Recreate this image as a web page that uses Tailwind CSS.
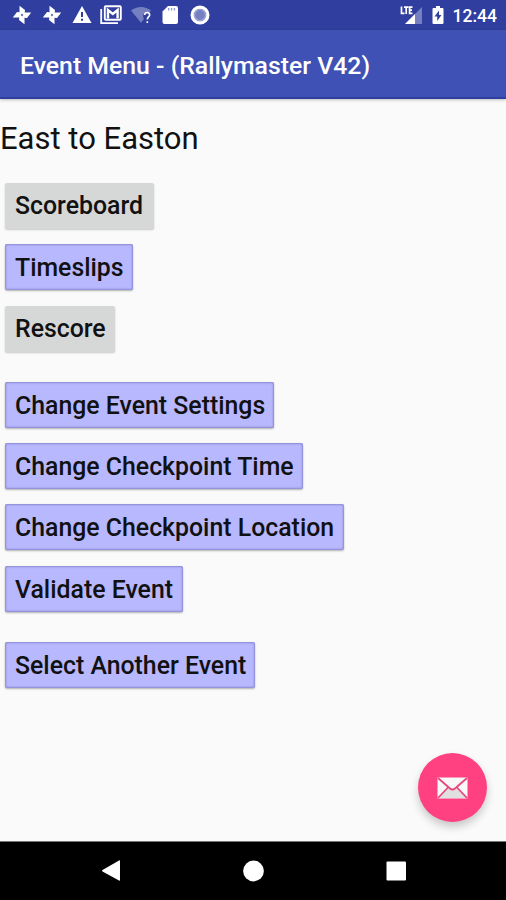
<!DOCTYPE html>
<html lang="en">

<head>
  <meta charset="UTF-8">
  <meta name="viewport" content="width=device-width, initial-scale=1.0">
  <title>Event Menu</title>
  <script src="https://cdn.jsdelivr.net/npm/@tailwindcss/browser@4"></script>
</head>

<body class="bg-[#fafafa] font-[Roboto,sans-serif] text-[#111]">
  <div class="relative flex flex-col h-[900px] w-[506px] overflow-hidden">
    <!-- Status Bar -->
    <div class="flex items-center justify-between h-[30px] shrink-0 bg-[#303f9f] pl-[12px] pr-[9px] text-white">
      <div class="flex items-center gap-[10px]">
        <svg class="size-[20px]" viewBox="0 0 20 20" fill="currentColor">
          <path d="M7.500 .8L13 5L12.500 10H7.500Z" />
          <path d="M19.200 7.500L15 13L10 12.500V7.500Z" />
          <path d="M12.500 19.200L7 15L7.500 10H12.500Z" />
          <path d="M.8 12.500L5 7L10 7.500V12.500Z" />
          <circle cx="10" cy="10" r="1.200" fill="#7580c1" />
        </svg>
        <svg class="size-[20px]" viewBox="0 0 20 20" fill="currentColor">
          <path d="M7.500 .8L13 5L12.500 10H7.500Z" />
          <path d="M19.200 7.500L15 13L10 12.500V7.500Z" />
          <path d="M12.500 19.200L7 15L7.500 10H12.500Z" />
          <path d="M.8 12.500L5 7L10 7.500V12.500Z" />
          <circle cx="10" cy="10" r="1.200" fill="#7580c1" />
        </svg>
        <svg class="size-[20px]" viewBox="0 0 20 20">
          <path fill="currentColor" d="M10 1L19.500 18H.5Z" />
          <path fill="#303f9f" d="M9 7h2v5H9zM9 13.700h2v2H9z" />
        </svg>
        <svg class="w-[22px] h-[20px] -ml-0.5" viewBox="0 0 22 20" fill="none" stroke="currentColor">
          <path stroke-width="1.800" d="M1.200 4V18.200H18" />
          <rect x="4.800" y="1.300" width="16" height="13.400" rx="1" stroke-width="1.900" />
          <path stroke-width="2.400" d="M8 13.500V5L12.800 9L17.600 5V13.500" />
        </svg>
        <svg class="w-[22px] h-[20px] -ml-0.5" viewBox="0 0 22 20">
          <path fill="#7580c1" d="M1 5.500C7 .8 15 .8 21 5.500L18.500 8.500C14 6.500 12 10 14 14L11 17.700Z" />
          <path fill="none" stroke="currentColor" stroke-width="1.700" d="M14.700 10C14.700 6.600 19.800 6.800 19.600 10C19.500 12 17.300 12 17.300 14.500M17.300 16.200V18" />
        </svg>
        <svg class="size-[20px] -ml-0.5" viewBox="0 0 20 20">
          <path fill="currentColor" d="M8 1H16Q18 1 18 3V17Q18 19 16 19H4.500Q2.500 19 2.500 17V6.500Z" />
          <path stroke="#8f98cf" stroke-width="1.300" d="M8.600 3V5.500M11.500 3V5.500M14.400 3V5.500" />
        </svg>
        <svg class="size-[20px]" viewBox="0 0 20 20">
          <circle cx="10" cy="10" r="7.900" fill="#7580c1" stroke="currentColor" stroke-width="3.200" />
          <circle cx="10" cy="10" r="5.500" fill="none" stroke="#a3aad9" stroke-width="1.200" />
        </svg>
      </div>
      <div class="flex items-center">
        <svg class="w-[23px] h-[20px]" viewBox="0 0 23 20">
          <path fill="#7580c1" d="M22 2V19H5Z" />
          <path fill="currentColor" d="M15 9V19H5Z" />
          <path fill="#303f9f" d="M0 0H13V10H0Z" />
          <path fill="none" stroke="currentColor" stroke-width="1.700" d="M1.500 1.500V8.300H4.500M4 2.200H8.500M6.200 2.200V9M12.500 2.200H9.600V8.300H12.500M9.600 5.200H12" />
        </svg>
        <svg class="w-[12px] h-[20px] ml-[9px]" viewBox="0 0 12 20">
          <path fill="currentColor" d="M4 1H8V3H10.500Q11.500 3 11.500 4V18Q11.500 19 10.500 19H1.500Q.5 19 .5 18V4Q.5 3 1.500 3H4Z" />
          <path fill="#303f9f" d="M7 5.500L2.500 11.500H5.200V16L9.500 10H7Z" />
        </svg>
        <span class="ml-[9px] text-[17.5px] leading-none font-medium pt-1">12:44</span>
      </div>
    </div>

    <!-- App Bar -->
    <div class="flex items-center h-[69px] shrink-0 bg-[#3f51b5] border-b-2 border-[#2d40a0] px-[20px] pt-[5px] shadow-[0_1px_3px_rgba(0,0,0,0.25)]">
      <h1 class="text-white text-[24.8px] font-medium whitespace-nowrap">Event Menu - (Rallymaster V42)</h1>
    </div>

    <!-- Menu -->
    <main class="flex-1 flex flex-col items-start pl-[5px]">
      <h2 class="-ml-[5px] mt-[20px] h-[38px] leading-[40px] text-[31px] whitespace-nowrap">East to Easton</h2>
      <div class="mt-[26px] flex flex-col items-start gap-[15.3px] text-[24.85px] font-medium leading-[46px] whitespace-nowrap">
        <button class="h-[46px] w-[149px] pl-[10px] text-left rounded-xs bg-[#d6d7d7] shadow-[0_1px_2px_rgba(0,0,0,0.2)]">Scoreboard</button>
        <button class="h-[46px] w-[128px] pl-[10px] pt-px text-left rounded-xs bg-[#b8b8ff] shadow-[inset_0_0_2px_1px_#8a88d0,0_1px_2px_rgba(0,0,0,0.3)]">Timeslips</button>
        <button class="h-[46px] w-[110px] pl-[10px] text-left rounded-xs bg-[#d6d7d7] shadow-[0_1px_2px_rgba(0,0,0,0.2)]">Rescore</button>
        <button class="mt-[15px] h-[46px] w-[269px] pl-[10px] pt-px text-left rounded-xs bg-[#b8b8ff] shadow-[inset_0_0_2px_1px_#8a88d0,0_1px_2px_rgba(0,0,0,0.3)]">Change Event Settings</button>
        <button class="h-[46px] w-[298px] pl-[10px] pt-px text-left rounded-xs bg-[#b8b8ff] shadow-[inset_0_0_2px_1px_#8a88d0,0_1px_2px_rgba(0,0,0,0.3)]">Change Checkpoint Time</button>
        <button class="h-[46px] w-[339px] pl-[10px] pt-px text-left rounded-xs bg-[#b8b8ff] shadow-[inset_0_0_2px_1px_#8a88d0,0_1px_2px_rgba(0,0,0,0.3)]">Change Checkpoint Location</button>
        <button class="h-[46px] w-[178px] pl-[10px] pt-px text-left rounded-xs bg-[#b8b8ff] shadow-[inset_0_0_2px_1px_#8a88d0,0_1px_2px_rgba(0,0,0,0.3)]">Validate Event</button>
        <button class="mt-[15px] h-[46px] w-[250px] pl-[10px] pt-px text-left rounded-xs bg-[#b8b8ff] shadow-[inset_0_0_2px_1px_#8a88d0,0_1px_2px_rgba(0,0,0,0.3)]">Select Another Event</button>
      </div>
    </main>

    <!-- Mail Button -->
    <button class="absolute right-[19px] bottom-[78px] size-[69px] rounded-full bg-[#ff4081] flex items-center justify-center shadow-[0_5px_8px_rgba(0,0,0,0.2)]">
      <svg class="w-[31px] h-[22px]" viewBox="0 0 31 22">
        <rect x=".5" y=".5" width="30" height="21" fill="#f8f8f8" />
        <path fill="#e0e0e0" d="M1 21L11 11.500Q15.500 15 20 11.500L30 21Z" />
        <path fill="none" stroke="#e8487f" stroke-width="1.800" d="M1 1L13 11.500Q15.500 13.500 18 11.500L30 1M1 21L11 10.500M30 21L20 10.500" />
      </svg>
    </button>

    <!-- Navigation Bar -->
    <nav class="h-[59px] shrink-0 bg-black border-t border-[#777] flex items-center">
      <svg class="w-[506px] h-[58px]" viewBox="0 0 506 58" fill="#fff">
        <path d="M102.500 28L119 18.500Q120 18 120 19V38Q120 39 119 38.500L102.500 29.500Q101.500 28.800 102.500 28Z" />
        <circle cx="253.500" cy="29" r="10.400" />
        <rect x="386.500" y="19.500" width="19.500" height="19" rx="1" />
      </svg>
    </nav>
  </div>
</body>

</html>
